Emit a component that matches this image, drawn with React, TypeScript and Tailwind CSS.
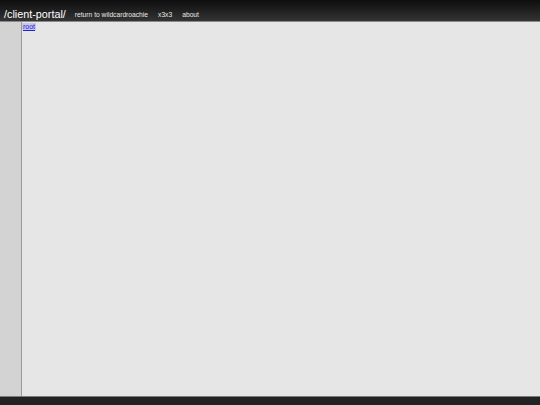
import React from 'react';

const navLinks = ['return to wildcardroachie', 'x3x3', 'about'];

const App: React.FC = () => {
  return (
    <div className="flex h-screen flex-col bg-[#e6e6e6] font-['Liberation_Sans',Arial,sans-serif]">
      {/* header bar */}
      <header className="flex h-[22px] shrink-0 items-end border-b border-[#8a8a8a] bg-gradient-to-b from-[#0e0e0e] to-[#343434] pb-[1px] pl-[4px]">
        <span className="text-[10.8px] leading-none text-white">/client-portal/</span>
        <nav className="ml-[9px] flex gap-[10px] pb-[1px]">
          {navLinks.map(link => (
            <a key={link} href="#" className="text-[6.7px] leading-none text-[#e8e8e8]">
              {link}
            </a>
          ))}
        </nav>
      </header>

      <div className="flex flex-1">
        <aside className="w-[22px] shrink-0 border-r border-[#999] bg-[#d3d3d3]" />
        <main className="flex flex-1 items-start bg-[#e6e6e6] pt-[1px] text-[7px] leading-none">
          <a href="#" className="block bg-[#c6c6ea] px-[1px] leading-[7px] text-[#2222dd] underline">
            root
          </a>
        </main>
      </div>

      {/* footer bar */}
      <footer className="h-[9px] shrink-0 border-t border-[#7a7a7a] bg-[#222]" />
    </div>
  );
};

export default App;
